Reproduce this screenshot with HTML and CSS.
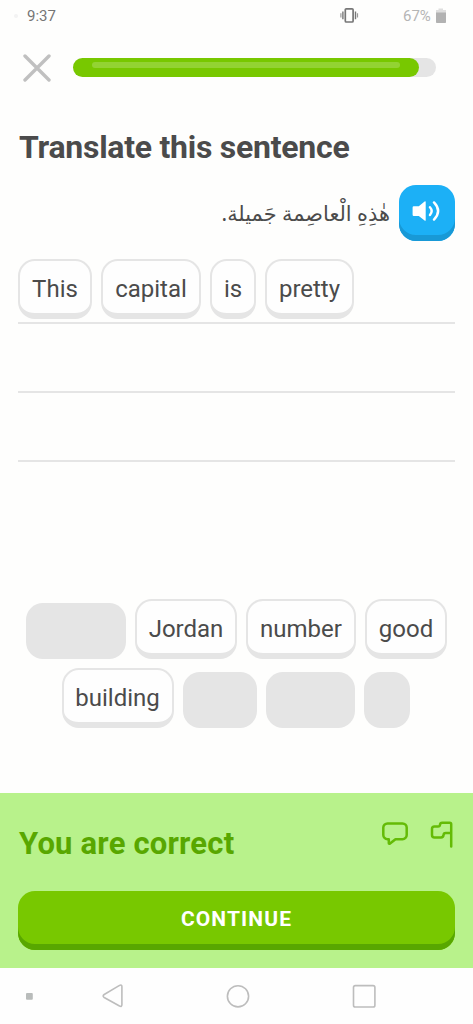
FILE: index.html
```html
<!DOCTYPE html>
<html lang="en">
<head>
<meta charset="utf-8">
<title>Translate this sentence</title>
<link rel="stylesheet" href="styles.css">
</head>
<body>
<div class="screen">
  <header class="status">
    <span class="status-dot"></span>
    <span class="clock">9:37</span>
    <svg class="vibrate" width="20" height="18" viewBox="0 0 20 18" fill="none" stroke="#777">
      <rect x="5.300" y="1.800" width="7.800" height="13.200" rx="1" stroke-width="1.700"/>
      <path d="M2.900 4.600v7.600M15.500 4.600v7.600" stroke-width="1.400"/>
      <path d="M.9 6.200v4.400M17.500 6.200v4.400" stroke-width="1.200" stroke="#999"/>
    </svg>
    <span class="percent">67%</span>
    <svg class="battery" width="10" height="15" viewBox="0 0 10 15">
      <path d="M0 2h2.500V.5h4.500V2H10v3H0z" fill="#dedede"/>
      <path d="M0 4.500h10V14.200a.8.8 0 0 1-.8.8H.8a.8.8 0 0 1-.8-.8z" fill="#b2b2b2"/>
    </svg>
  </header>

  <div class="topbar">
    <svg class="close" width="28" height="28" viewBox="0 0 28 28" fill="none" stroke="#c0c0c0" stroke-width="3.400" stroke-linecap="round">
      <path d="M2 2l24 24M26 2L2 26"/>
    </svg>
    <div class="progress"><div class="progress-fill"><div class="progress-shine"></div></div></div>
  </div>

  <main class="exercise">
    <h1 class="title">Translate this sentence</h1>
    <div class="prompt">
      <span class="arabic" lang="ar" dir="rtl">هٰذِهِ الْعاصِمة جَميلة.</span>
      <button class="speaker" aria-label="Play audio">
        <svg width="28" height="24" viewBox="0 0 28 24" fill="none" stroke="#fff" stroke-width="2.400" stroke-linecap="round">
          <path d="M1.800 7.200h5L12.600 2.400q1.100-.7 1.100.6v18q0 1.300-1.100.6L6.800 17H1.800q-1.200 0-1.200-1.200V8.400q0-1.200 1.200-1.200z" fill="#fff" stroke="none"/>
          <path d="M18 8.200q3.400 3.800 0 7.800M22 3.400q8.200 8.600 0 17.200"/>
        </svg>
      </button>
    </div>
    <div class="answer">
      <div class="line">
        <span class="tile w-this">This</span>
        <span class="tile w-capital">capital</span>
        <span class="tile w-is">is</span>
        <span class="tile w-pretty">pretty</span>
      </div>
      <div class="line"></div>
      <div class="line"></div>
    </div>
    <div class="bank">
      <div class="bank-row">
        <span class="blank w-capital"></span>
        <span class="tile w-jordan">Jordan</span>
        <span class="tile w-number">number</span>
        <span class="tile w-good">good</span>
      </div>
      <div class="bank-row second">
        <span class="tile w-building">building</span>
        <span class="blank w-this"></span>
        <span class="blank w-pretty"></span>
        <span class="blank w-is"></span>
      </div>
    </div>
  </main>

  <section class="result">
    <div class="result-head">
      <h2 class="verdict">You are correct</h2>
      <div class="actions">
        <svg width="28" height="26" viewBox="0 0 28 26" fill="none" stroke="#64bb06" stroke-width="2.500" stroke-linejoin="round">
          <path d="M6.500 2.400h15a4.200 4.200 0 0 1 4.200 4.200v7.400a4.200 4.200 0 0 1-4.200 4.200H14.500L9 22.600q-1.200.6-1.200-.6V18.200H6.500A4.200 4.200 0 0 1 2.300 14V6.600A4.200 4.200 0 0 1 6.500 2.400z"/>
        </svg>
        <svg width="24" height="28" viewBox="0 0 24 28" fill="none" stroke="#64bb06" stroke-width="2.500" stroke-linejoin="round" stroke-linecap="round">
          <path d="M21.200 25.500V3.200q0-1.500-1.500-1.500H12.200q-2 0-2.200 2Q9.900 5.400 8 5.400H4.500Q2 5.400 2 7.700V14q0 2.500 2.500 2.500H11q2.300 0 2.500-2.300.100-2.300 2.300-2.300h5.200"/>
        </svg>
      </div>
    </div>
    <button class="continue">CONTINUE</button>
  </section>

  <nav class="navbar">
    <svg width="473" height="56" viewBox="0 0 473 56" fill="none" stroke="#bdbdbd" stroke-width="1.600">
      <rect x="26" y="25" width="6.800" height="6.800" rx="1" fill="#b9bcbb" stroke="none"/>
      <path d="M104.200 26.500L119.500 17.400q2.400-1.100 2.400 1.200V36.800q0 2.300-2.400 1.200L104.200 29.500q-2.100-1.500 0-3z"/>
      <circle cx="238" cy="28.300" r="10.600"/>
      <rect x="353.500" y="17.600" width="21.400" height="21.400" rx="1.800"/>
    </svg>
  </nav>
</div>
</body>
</html>
```
FILE: styles.css
```css
* { box-sizing: border-box; }
body { margin: 0; background: #fefefd; font-family: Roboto, sans-serif; color: #4b4b4b; }
button { border: 0; padding: 0; font-family: inherit; }
h1, h2 { margin: 0; font-weight: 700; white-space: nowrap; }
svg { display: block; flex: none; }
.screen { width: 473px; height: 1024px; display: flex; flex-direction: column; overflow: hidden; }

.status { height: 32px; display: flex; align-items: center; padding: 0 27px 0 14px; color: #757575; font-size: 15px; }
.status-dot { width: 4px; height: 4px; border-radius: 2px; background: #f3f3f3; margin-right: 9px; }
.clock { width: 313px; }
.percent { margin-left: 43px; width: 33px; color: #b5b5b5; }

.topbar { height: 72px; display: flex; align-items: center; padding: 2px 37px 0 23px; }
.close { margin-right: 22px; }
.progress { width: 363px; height: 19px; border-radius: 10px; background: #e5e5e5; margin-top: -1px; }
.progress-fill { width: 346px; height: 19px; border-radius: 10px; background: #78c800; padding: 4px 19px; }
.progress-shine { height: 6px; border-radius: 3px; background: #93d333; }

.exercise { height: 689px; padding: 0 18px; display: flex; flex-direction: column; flex: none; }
.title { height: 81px; padding-top: 25px; font-size: 32px; line-height: 38px; padding-left: 1px; letter-spacing: -0.26px; }
.prompt { height: 56px; display: flex; justify-content: flex-end; gap: 9px; }
.arabic { font-family: "Noto Sans", "DejaVu Sans", sans-serif; font-size: 20.9px; line-height: 56px; white-space: nowrap; }
.speaker { width: 56px; height: 56px; border-radius: 17px; background: #1cb0f6; box-shadow: inset 0 -6px #1899d6; padding: 0 0 5px 13px; display: flex; align-items: center; }
.prompt { padding-top: 1px; height: 57px; }

.answer { margin-top: 14px; }
.line { height: 69px; padding-top: 4px; border-bottom: 2px solid #e5e5e5; display: flex; gap: 9px; }
.tile { height: 60px; border: 2px solid #e5e5e5; border-bottom-width: 6px; border-radius: 17px; background: #fefefe; font-size: 24px; line-height: 56px; text-align: center; white-space: nowrap; flex: none; }
.bank { margin-top: 137px; display: flex; flex-direction: column; gap: 9px; }
.bank-row { display: flex; justify-content: center; align-items: flex-end; gap: 9px; }
.second { padding-right: 2px; }
.blank { height: 56px; border-radius: 17px; background: #e5e5e5; flex: none; }
.w-this { width: 74px; }
.w-capital { width: 100px; }
.w-is { width: 46px; }
.w-pretty { width: 89px; }
.w-jordan { width: 102px; }
.w-number { width: 110px; }
.w-good { width: 82px; }
.w-building { width: 112px; }

.exercise + .result { margin-top: 1px; }
.result { height: 175px; background: #b8f28b; padding: 0 18px; flex: none; }
.result-head { height: 98px; display: flex; justify-content: space-between; }
.verdict { padding: 32px 0 0 1px; font-size: 31px; line-height: 38px; color: #58a700; letter-spacing: 0.2px; }
.actions { display: flex; gap: 21px; padding: 28px 1px 0 0; }
.continue { width: 437px; height: 59px; display: block; border-radius: 17px; background: #78c800; box-shadow: inset 0 -6px #58a700; color: #fff; font-size: 21px; font-weight: 700; letter-spacing: 1.1px; padding-bottom: 4px; }
.navbar { height: 56px; background: #fefefe; }
```
